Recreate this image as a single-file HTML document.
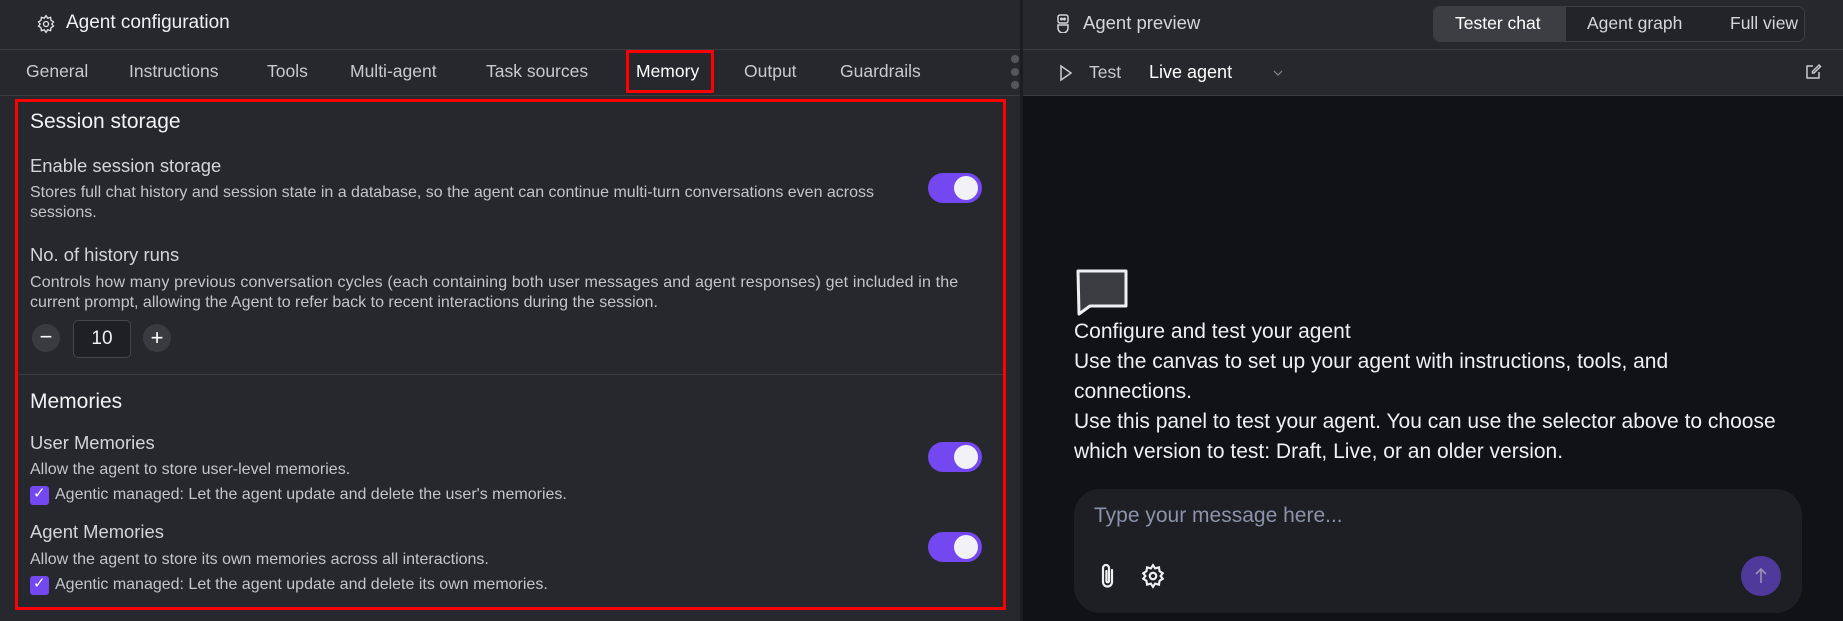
<!DOCTYPE html>
<html><head><meta charset="utf-8"><style>
*{box-sizing:border-box;margin:0;padding:0}
body{width:1843px;height:621px;background:#27282d;font-family:"Liberation Sans",sans-serif;color:#e4e4e7;position:relative;overflow:hidden}
.a{position:absolute;white-space:nowrap}
.tab{position:absolute;top:61px;font-size:17.5px;color:#c9cad0}
.tg{position:absolute;width:54px;height:30px;border-radius:15px;background:#7448f0}
.tg::after{content:"";position:absolute;right:4px;top:3px;width:24px;height:24px;border-radius:50%;background:#f2f2f6}
.h2{font-size:21px;color:#f2f2f4}
.lbl{font-size:18.4px;color:#d4d5da}
.d{font-size:16px;color:#c4c5cb}
.cb{position:absolute;left:30px;width:19px;height:19px;border-radius:3px;background:#7448f0}
.p{font-size:21px;color:#f0f0f2;left:1074px}
</style></head><body>
<div class="a" style="left:0;top:49px;width:1022px;height:1px;background:#3b3c42"></div>
<div class="a" style="left:0;top:95px;width:1022px;height:1px;background:#3b3c42"></div>
<svg class="a" style="left:36px;top:14px" width="20" height="20" viewBox="0 0 24 24" fill="none" stroke="#e4e4e7" stroke-width="1.6"><circle cx="12" cy="12" r="3"/><path d="M12 2l2 3 3.5-1 .5 3.5 3 2-2 2.5 2 2.5-3 2-.5 3.5-3.5-1-2 3-2-3-3.5 1-.5-3.5-3-2 2-2.5-2-2.5 3-2 .5-3.5 3.5 1z"/></svg>
<div class="a" style="left:66px;top:12px;font-size:19px;color:#f0f0f2">Agent configuration</div>
<div class="tab" style="left:26px">General</div>
<div class="tab" style="left:129px">Instructions</div>
<div class="tab" style="left:267px">Tools</div>
<div class="tab" style="left:350px">Multi-agent</div>
<div class="tab" style="left:486px">Task sources</div>
<div class="tab" style="left:636px;color:#fff">Memory</div>
<div class="tab" style="left:744px">Output</div>
<div class="tab" style="left:840px">Guardrails</div>
<div class="a" style="left:626px;top:50px;width:88px;height:43px;border:3px solid #f00"></div>
<div class="a" style="left:1011px;top:55px;width:8px;height:8px;border-radius:50%;background:#55565c"></div>
<div class="a" style="left:1011px;top:68px;width:8px;height:8px;border-radius:50%;background:#55565c"></div>
<div class="a" style="left:1011px;top:81px;width:8px;height:8px;border-radius:50%;background:#55565c"></div>
<div class="a" style="left:1020px;top:0;width:3px;height:621px;background:#1c1d21"></div>
<div class="a" style="left:15px;top:99px;width:991px;height:511px;border:3px solid #f00"></div>
<div class="a h2" style="left:30px;top:110px">Session storage</div>
<div class="a lbl" style="left:30px;top:155px">Enable session storage</div>
<div class="a d" style="left:30px;top:184px">Stores full chat history and session state in a database, so the agent can continue multi-turn conversations even across</div>
<div class="a d" style="left:30px;top:204px">sessions.</div>
<div class="tg" style="left:928px;top:173px"></div>
<div class="a lbl" style="left:30px;top:244px">No. of history runs</div>
<div class="a d" style="left:30px;top:274px;letter-spacing:0.15px">Controls how many previous conversation cycles (each containing both user messages and agent responses) get included in the</div>
<div class="a d" style="left:30px;top:294px">current prompt, allowing the Agent to refer back to recent interactions during the session.</div>
<div class="a" style="left:32px;top:324px;width:28px;height:28px;border-radius:50%;background:#3a3b41;color:#fff;font-size:22px;line-height:26px;text-align:center">−</div>
<div class="a" style="left:73px;top:320px;width:58px;height:38px;border:1px solid #45464c;border-radius:5px;background:#1f2024;font-size:19px;line-height:36px;text-align:center;color:#f0f0f2">10</div>
<div class="a" style="left:143px;top:324px;width:28px;height:28px;border-radius:50%;background:#3a3b41;color:#fff;font-size:22px;line-height:27px;text-align:center">+</div>
<div class="a" style="left:18px;top:374px;width:985px;height:1px;background:#3b3c42"></div>
<div class="a h2" style="left:30px;top:390px">Memories</div>
<div class="a lbl" style="left:30px;top:432px">User Memories</div>
<div class="a d" style="left:30px;top:461px">Allow the agent to store user-level memories.</div>
<div class="tg" style="left:928px;top:442px"></div>
<div class="cb" style="top:486px"></div><div class="a" style="left:33px;top:484px;color:#fff;font-size:15px">✓</div>
<div class="a d" style="left:55px;top:486px">Agentic managed: Let the agent update and delete the user's memories.</div>
<div class="a lbl" style="left:30px;top:521px">Agent Memories</div>
<div class="a d" style="left:30px;top:551px">Allow the agent to store its own memories across all interactions.</div>
<div class="tg" style="left:928px;top:532px"></div>
<div class="cb" style="top:576px"></div><div class="a" style="left:33px;top:574px;color:#fff;font-size:15px">✓</div>
<div class="a d" style="left:55px;top:576px">Agentic managed: Let the agent update and delete its own memories.</div>
<div class="a" style="left:1023px;top:95px;width:820px;height:526px;background:#111216"></div>
<div class="a" style="left:1023px;top:49px;width:820px;height:1px;background:#3b3c42"></div>
<div class="a" style="left:1023px;top:95px;width:820px;height:1px;background:#3b3c42"></div>
<svg class="a" style="left:1055px;top:13px" width="16" height="20" viewBox="0 0 16 20" fill="none" stroke="#d4d5da" stroke-width="1.5"><rect x="3" y="2" width="10" height="8" rx="2"/><circle cx="6.5" cy="6" r=".8" fill="#d4d5da"/><circle cx="9.5" cy="6" r=".8" fill="#d4d5da"/><path d="M3 12h10v3a4 4 0 0 1-10 0z"/></svg>
<div class="a" style="left:1083px;top:12px;font-size:18.5px;color:#d4d5da">Agent preview</div>
<div class="a" style="left:1433px;top:6px;width:372px;height:36px;border:1px solid #3d3e44;border-radius:7px;background:#232428"></div>
<div class="a" style="left:1434px;top:7px;width:132px;height:34px;border-radius:6px 0 0 6px;background:#3d3e43"></div>
<div class="a" style="left:1455px;top:13px;font-size:17.5px;color:#fff">Tester chat</div>
<div class="a" style="left:1587px;top:13px;font-size:17.5px;color:#d4d5da">Agent graph</div>
<div class="a" style="left:1730px;top:13px;font-size:17.5px;color:#d4d5da">Full view</div>
<svg class="a" style="left:1058px;top:63px" width="16" height="20" viewBox="0 0 16 20" fill="none" stroke="#c9cad0" stroke-width="1.5"><path d="M3 3l10 7-10 7z"/></svg>
<div class="a" style="left:1089px;top:62px;font-size:17.5px;color:#c9cad0">Test</div>
<div class="a" style="left:1149px;top:62px;font-size:18px;color:#fff">Live agent</div>
<svg class="a" style="left:1272px;top:68px" width="12" height="10" viewBox="0 0 12 10" fill="none" stroke="#888" stroke-width="1.2"><path d="M2 3l4 4 4-4"/></svg>
<svg class="a" style="left:1804px;top:63px" width="18" height="18" viewBox="0 0 18 18" fill="none" stroke="#c9cad0" stroke-width="1.5"><path d="M9 3H3v12h12V9"/><path d="M15 2l1.5 1.5L10 10H8.5V8.5z"/></svg>
<svg class="a" style="left:1075px;top:268px" width="56" height="48" viewBox="0 0 56 48"><path d="M3 3h48v35H15L4 46z" fill="#3b3c41" stroke="#f0f0f2" stroke-width="3" stroke-linejoin="round"/></svg>
<div class="a p" style="top:320px">Configure and test your agent</div>
<div class="a p" style="top:350px">Use the canvas to set up your agent with instructions, tools, and</div>
<div class="a p" style="top:380px">connections.</div>
<div class="a p" style="top:410px">Use this panel to test your agent. You can use the selector above to choose</div>
<div class="a p" style="top:440px">which version to test: Draft, Live, or an older version.</div>
<div class="a" style="left:1074px;top:489px;width:728px;height:124px;border-radius:26px;background:#1e1f24"></div>
<div class="a" style="left:1094px;top:504px;font-size:21px;color:#8a93a8">Type your message here...</div>
<svg class="a" style="left:1098px;top:562px" width="20" height="28" viewBox="0 0 20 28" fill="none" stroke="#f0f0f2" stroke-width="2.2" stroke-linecap="round"><path d="M14 8v12a4.5 4.5 0 0 1-9 0V6a3 3 0 0 1 6 0v13a1.3 1.3 0 0 1-2.6 0V9"/></svg>
<svg class="a" style="left:1140px;top:563px" width="26" height="26" viewBox="0 0 24 24" fill="none" stroke="#f0f0f2" stroke-width="2"><circle cx="12" cy="12" r="3"/><path d="M12 2l2 3 3.5-1 .5 3.5 3 2-2 2.5 2 2.5-3 2-.5 3.5-3.5-1-2 3-2-3-3.5 1-.5-3.5-3-2 2-2.5-2-2.5 3-2 .5-3.5 3.5 1z"/></svg>
<div class="a" style="left:1741px;top:556px;width:40px;height:40px;border-radius:50%;background:#4e3a9a"></div>
<svg class="a" style="left:1753px;top:566px" width="16" height="20" viewBox="0 0 16 20" fill="none" stroke="#9a93b8" stroke-width="1.6"><path d="M8 17V3M3 8l5-5 5 5"/></svg>
</body></html>
